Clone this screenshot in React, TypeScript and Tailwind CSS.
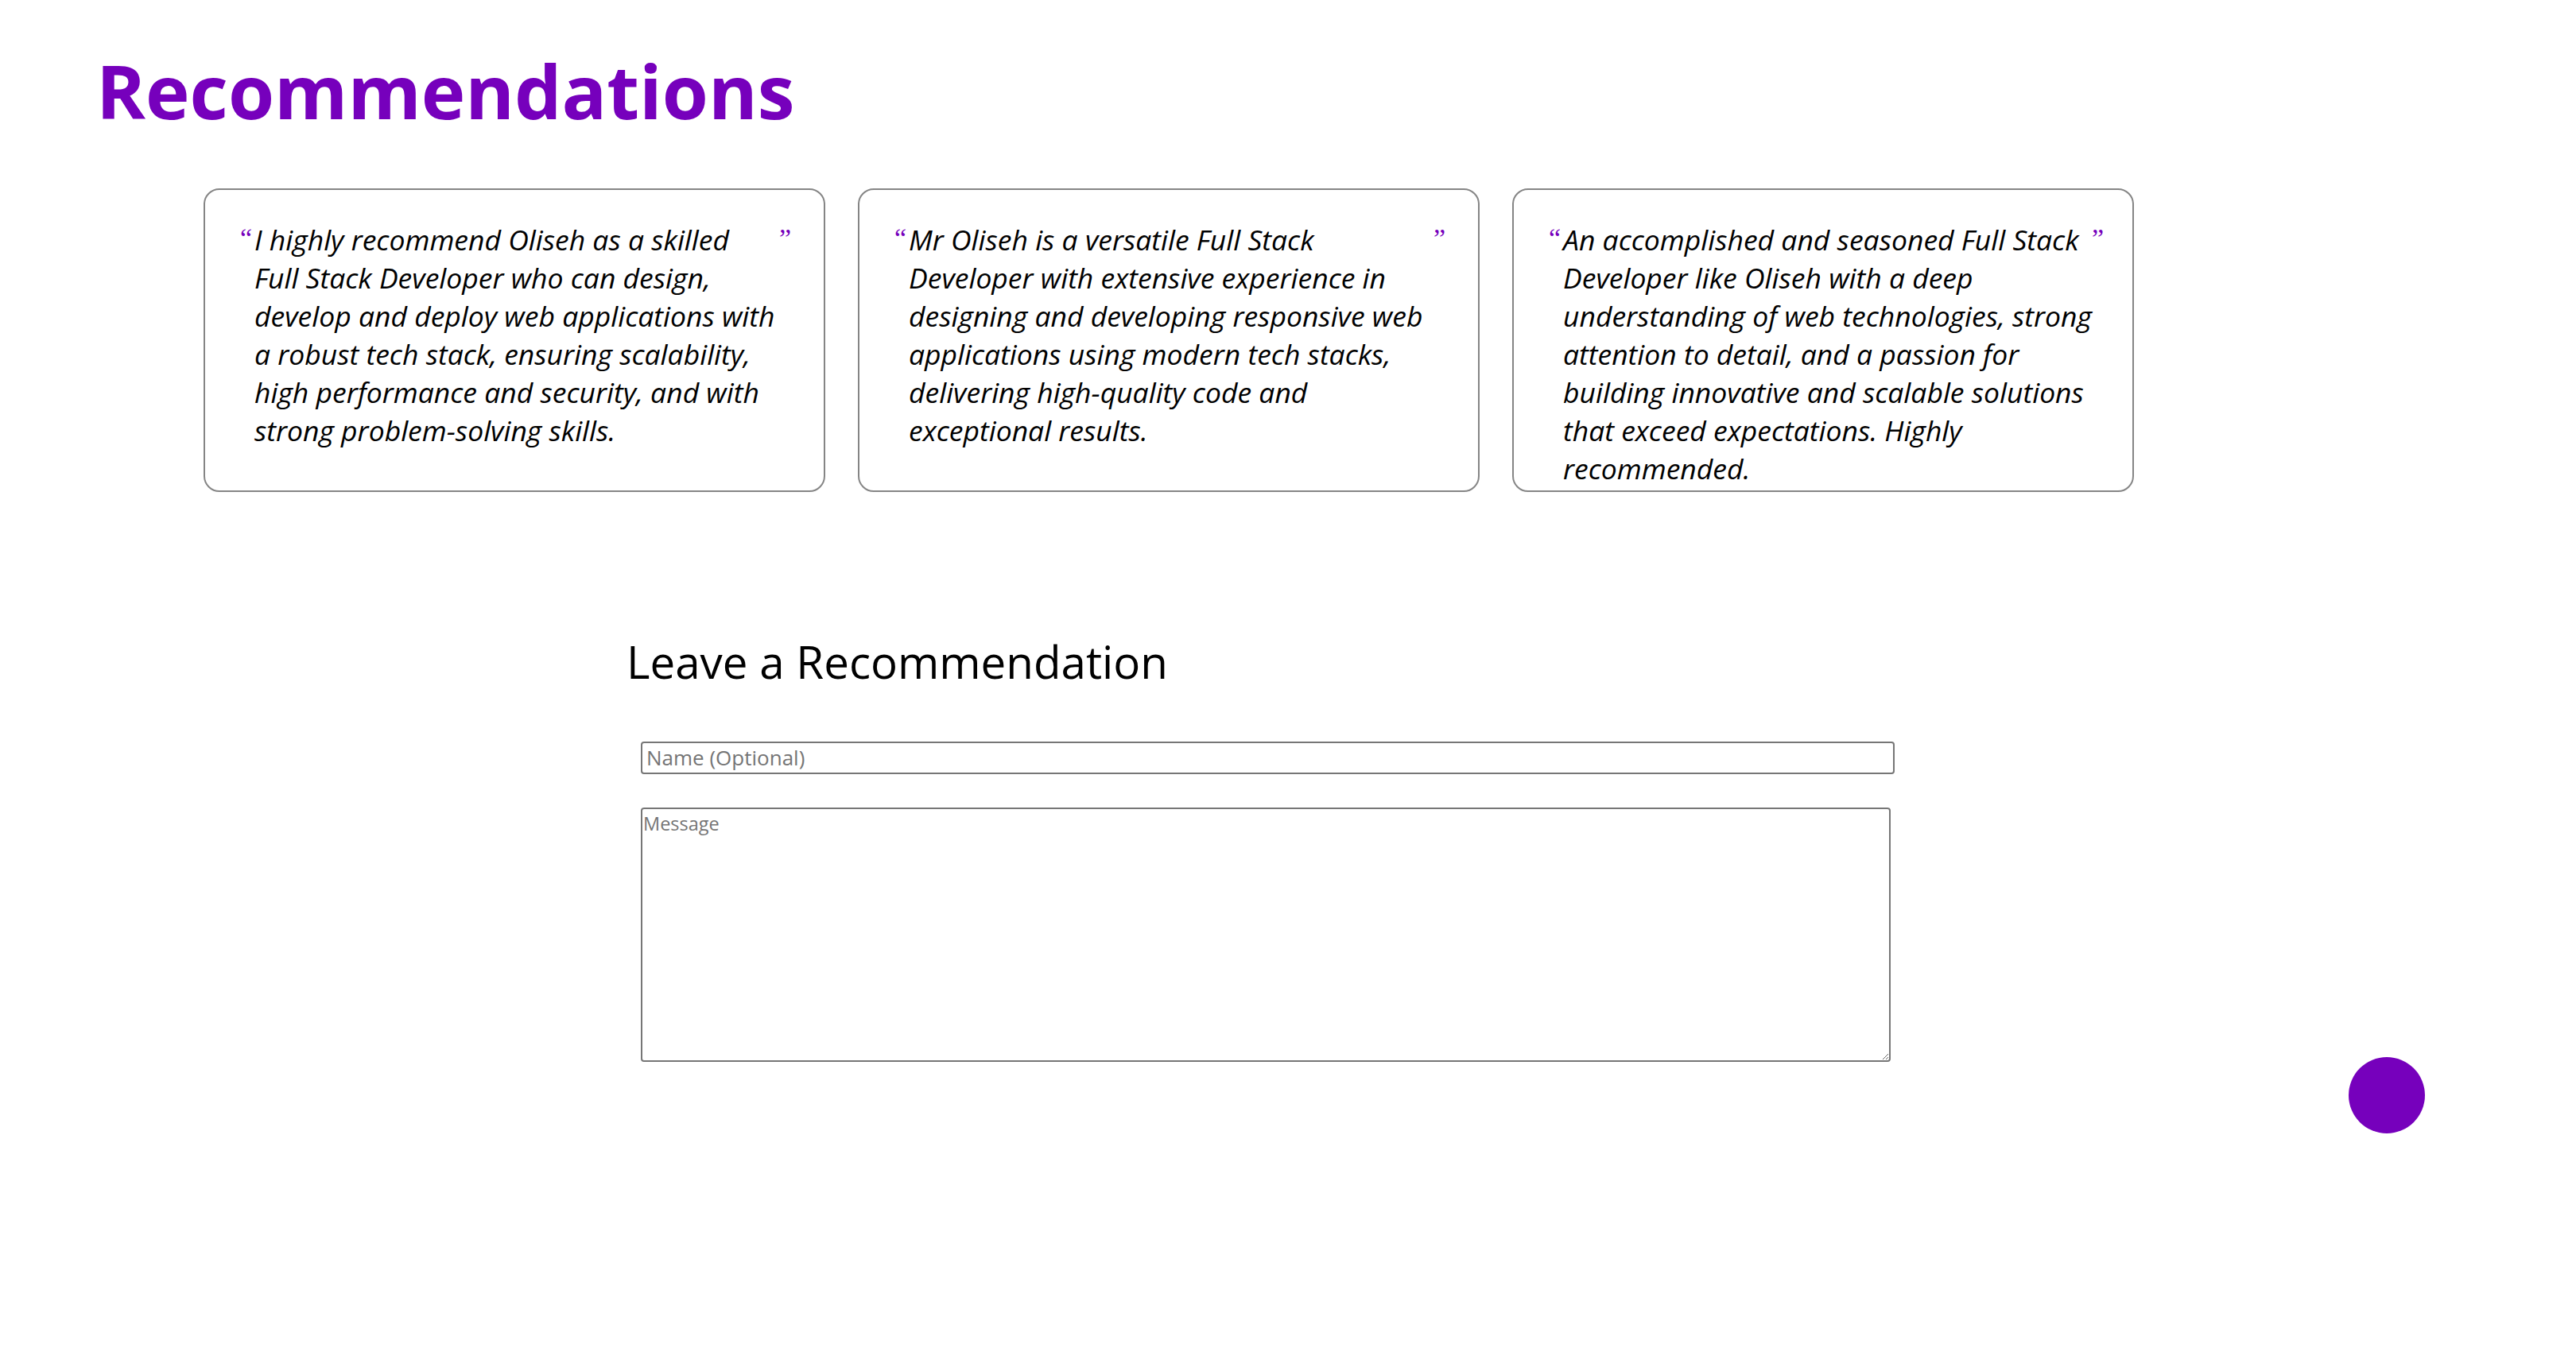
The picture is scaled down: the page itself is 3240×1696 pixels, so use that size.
const recommendations = [
  [
    "I highly recommend Oliseh as a skilled",
    "Full Stack Developer who can design,",
    "develop and deploy web applications with",
    "a robust tech stack, ensuring scalability,",
    "high performance and security, and with",
    "strong problem-solving skills.",
  ],
  [
    "Mr Oliseh is a versatile Full Stack",
    "Developer with extensive experience in",
    "designing and developing responsive web",
    "applications using modern tech stacks,",
    "delivering high-quality code and",
    "exceptional results.",
  ],
  [
    "An accomplished and seasoned Full Stack",
    "Developer like Oliseh with a deep",
    "understanding of web technologies, strong",
    "attention to detail, and a passion for",
    "building innovative and scalable solutions",
    "that exceed expectations. Highly",
    "recommended.",
  ],
];

const RecommendationCard = ({ lines }: { lines: string[] }) => {
  return (
    <div className="w-[782px] h-[382px] shrink-0 bg-white border-2 border-[#858585] rounded-[20px] pt-[38px] pl-[44px] pr-[38px] flex">
      {/* opening quote */}
      <span className="w-[18px] shrink-0 mt-[6px] text-[34px] leading-none text-[#7600bc] font-['Liberation_Serif',serif]">
        “
      </span>
      <p className="flex-1 italic text-[35.5px] leading-[48px] text-black font-['Open_Sans',sans-serif]">
        {lines.map((line, i) => (
          <span key={i} className="block whitespace-nowrap">
            {line}
          </span>
        ))}
      </p>
      {/* closing quote */}
      <span className="w-[18px] shrink-0 mt-[6px] text-[34px] leading-none text-[#7600bc] font-['Liberation_Serif',serif]">
        ”
      </span>
    </div>
  );
};

export default function App() {
  return (
    <div className="min-h-screen w-full bg-white font-['Open_Sans',sans-serif]">
      {/* Header */}
      <h1 className="pt-[67px] pl-[121px] text-[94px] leading-none font-bold text-[#7600bc]">
        Recommendations
      </h1>

      {/* Cards row */}
      <div className="flex gap-[41px] pl-[256px] mt-[76px]">
        {recommendations.map((lines, i) => (
          <RecommendationCard key={i} lines={lines} />
        ))}
      </div>

      {/* Leave a recommendation form */}
      <div className="mt-[186px] pl-[788px] w-[2400px]">
        <h2 className="text-[56.5px] leading-none font-normal text-black">
          Leave a Recommendation
        </h2>
        <form className="mt-[71px] ml-[18px] flex flex-col gap-[42px]">
          <input
            type="text"
            placeholder="Name (Optional)"
            className="w-[1577px] h-[41px] px-[5px] border-2 border-[#767676] rounded-[4px] text-[26px] placeholder:text-[#757575] outline-none"
          />
          <textarea
            placeholder="Message"
            className="w-[1572px] h-[320px] p-[1px] border-2 border-[#767676] rounded-[4px] text-[23.5px] placeholder:text-[#757575] outline-none"
          />
        </form>
      </div>

      {/* Floating button */}
      <button className="fixed right-[190px] bottom-[270px] w-[96px] h-[96px] rounded-full bg-[#7600bc]" />
    </div>
  );
}
